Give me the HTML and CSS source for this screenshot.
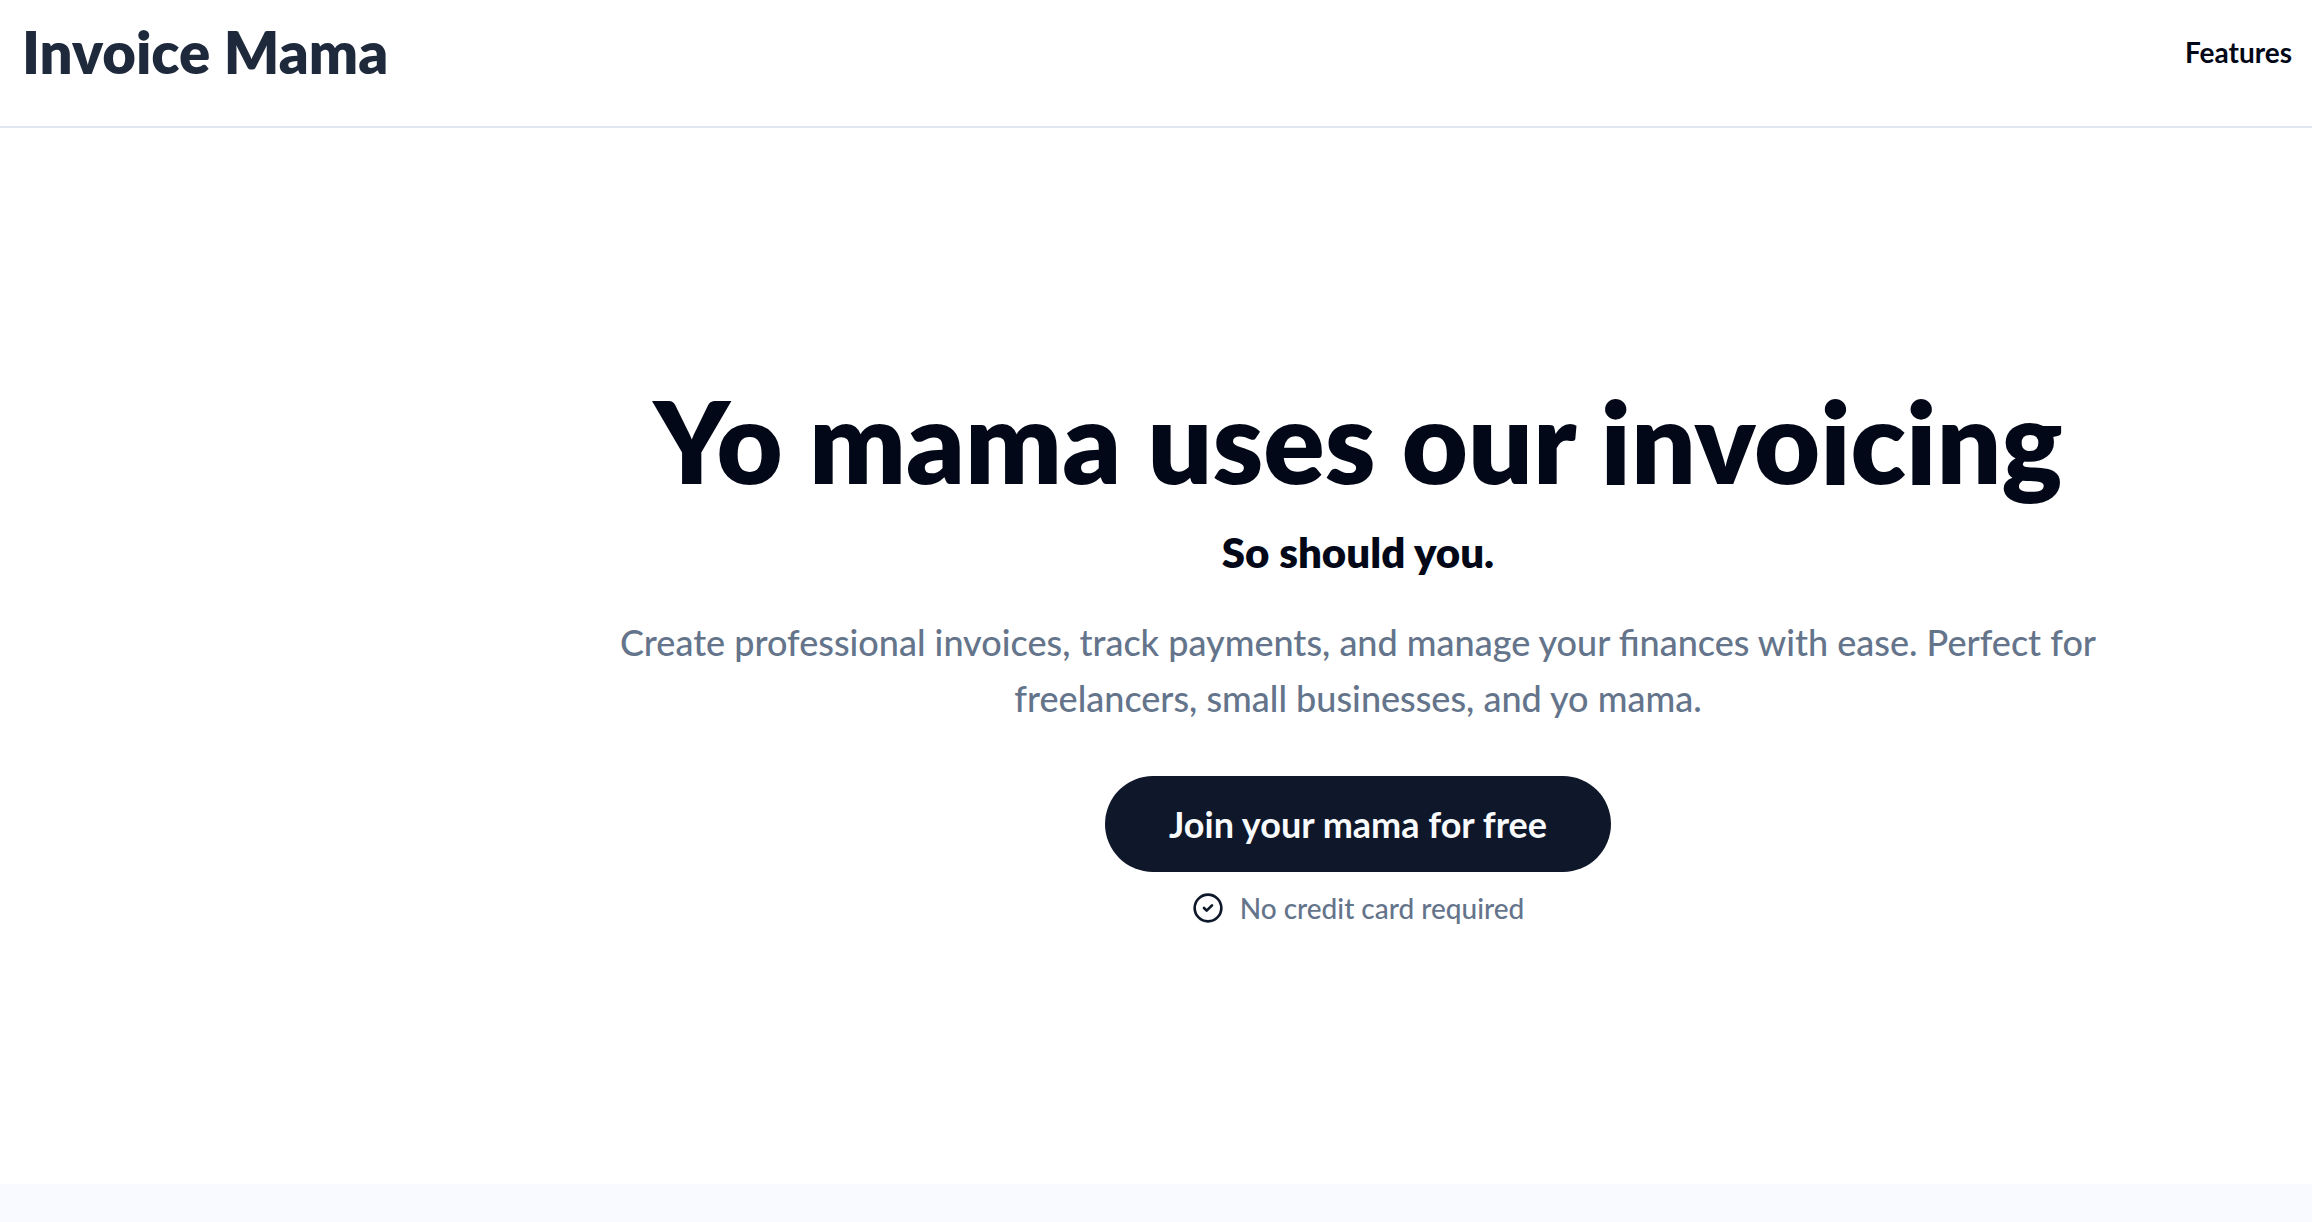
FILE: index.html
```html
<!DOCTYPE html>
<html lang="en">
<head>
<meta charset="utf-8">
<title>Invoice Mama</title>
<link rel="stylesheet" href="styles.css">
</head>
<body>
<header class="header">
  <a class="brand" href="#">Invoice Mama</a>
  <nav class="nav"><a class="nav-link" href="#features">Features</a></nav>
</header>
<main>
  <section class="hero">
    <div class="hero-content">
      <h1 class="title">Yo mama uses our invoicing</h1>
      <p class="tagline">So should you.</p>
      <p class="lead">Create professional invoices, track payments, and manage your finances with ease. Perfect for freelancers, small businesses, and yo mama.</p>
      <button class="cta" type="button">Join your mama for free</button>
      <p class="note">
        <svg class="note-icon" viewBox="0 0 24 24" aria-hidden="true"><circle cx="12" cy="12" r="10"/><path d="m9 12 2 2 4-4"/></svg>
        <span>No credit card required</span>
      </p>
    </div>
  </section>
  <section class="features" id="features"></section>
</main>
</body>
</html>
```
FILE: styles.css
```css
* { box-sizing: border-box; }

body {
  margin: 0;
  min-height: 100vh;
  display: flex;
  flex-direction: column;
  background: #fff;
  color: #020817;
  font-family: "Lato", sans-serif;
}

h1, p { margin: 0; }

.header {
  display: flex;
  align-items: center;
  justify-content: space-between;
  padding: 16px 20px 38px 22px;
  border-bottom: 2px solid #e2e6f2;
}

.brand {
  color: #1e293b;
  font-size: 58px;
  font-weight: 800;
  line-height: 72px;
  text-decoration: none;
}

.nav-link {
  color: #020817;
  font-size: 28px;
  font-weight: 700;
  line-height: 40px;
  text-decoration: none;
}

main {
  flex: 1;
  display: flex;
  flex-direction: column;
}

.hero {
  display: flex;
  justify-content: center;
  padding: 256px 0 256px 404px;
}

.hero-content {
  display: flex;
  flex-direction: column;
  align-items: center;
  width: 100%;
  max-width: 1536px;
  text-align: center;
}

.title {
  font-size: 114px;
  font-weight: 800;
  line-height: 112px;
}

.tagline {
  margin-top: 32px;
  font-size: 42px;
  font-weight: 800;
  line-height: 48px;
}

.lead {
  margin-top: 38px;
  color: #64748b;
  font-size: 36px;
  font-weight: 500;
  line-height: 56px;
}

.cta {
  margin-top: 50px;
  border: 0;
  border-radius: 48px;
  background: #0f172a;
  color: #f8fafc;
  padding: 20px 64px;
  font: 700 36px/56px "Lato", sans-serif;
}

.note {
  display: flex;
  align-items: center;
  gap: 16px;
  margin-top: 16px;
  color: #64748b;
  font-size: 28px;
  font-weight: 500;
  line-height: 40px;
}

.note-icon {
  width: 32px;
  height: 32px;
  fill: none;
  stroke: #0f172a;
  stroke-width: 2;
  stroke-linecap: round;
  stroke-linejoin: round;
}

.features {
  flex: 1;
  background: #f8faff;
}
```
